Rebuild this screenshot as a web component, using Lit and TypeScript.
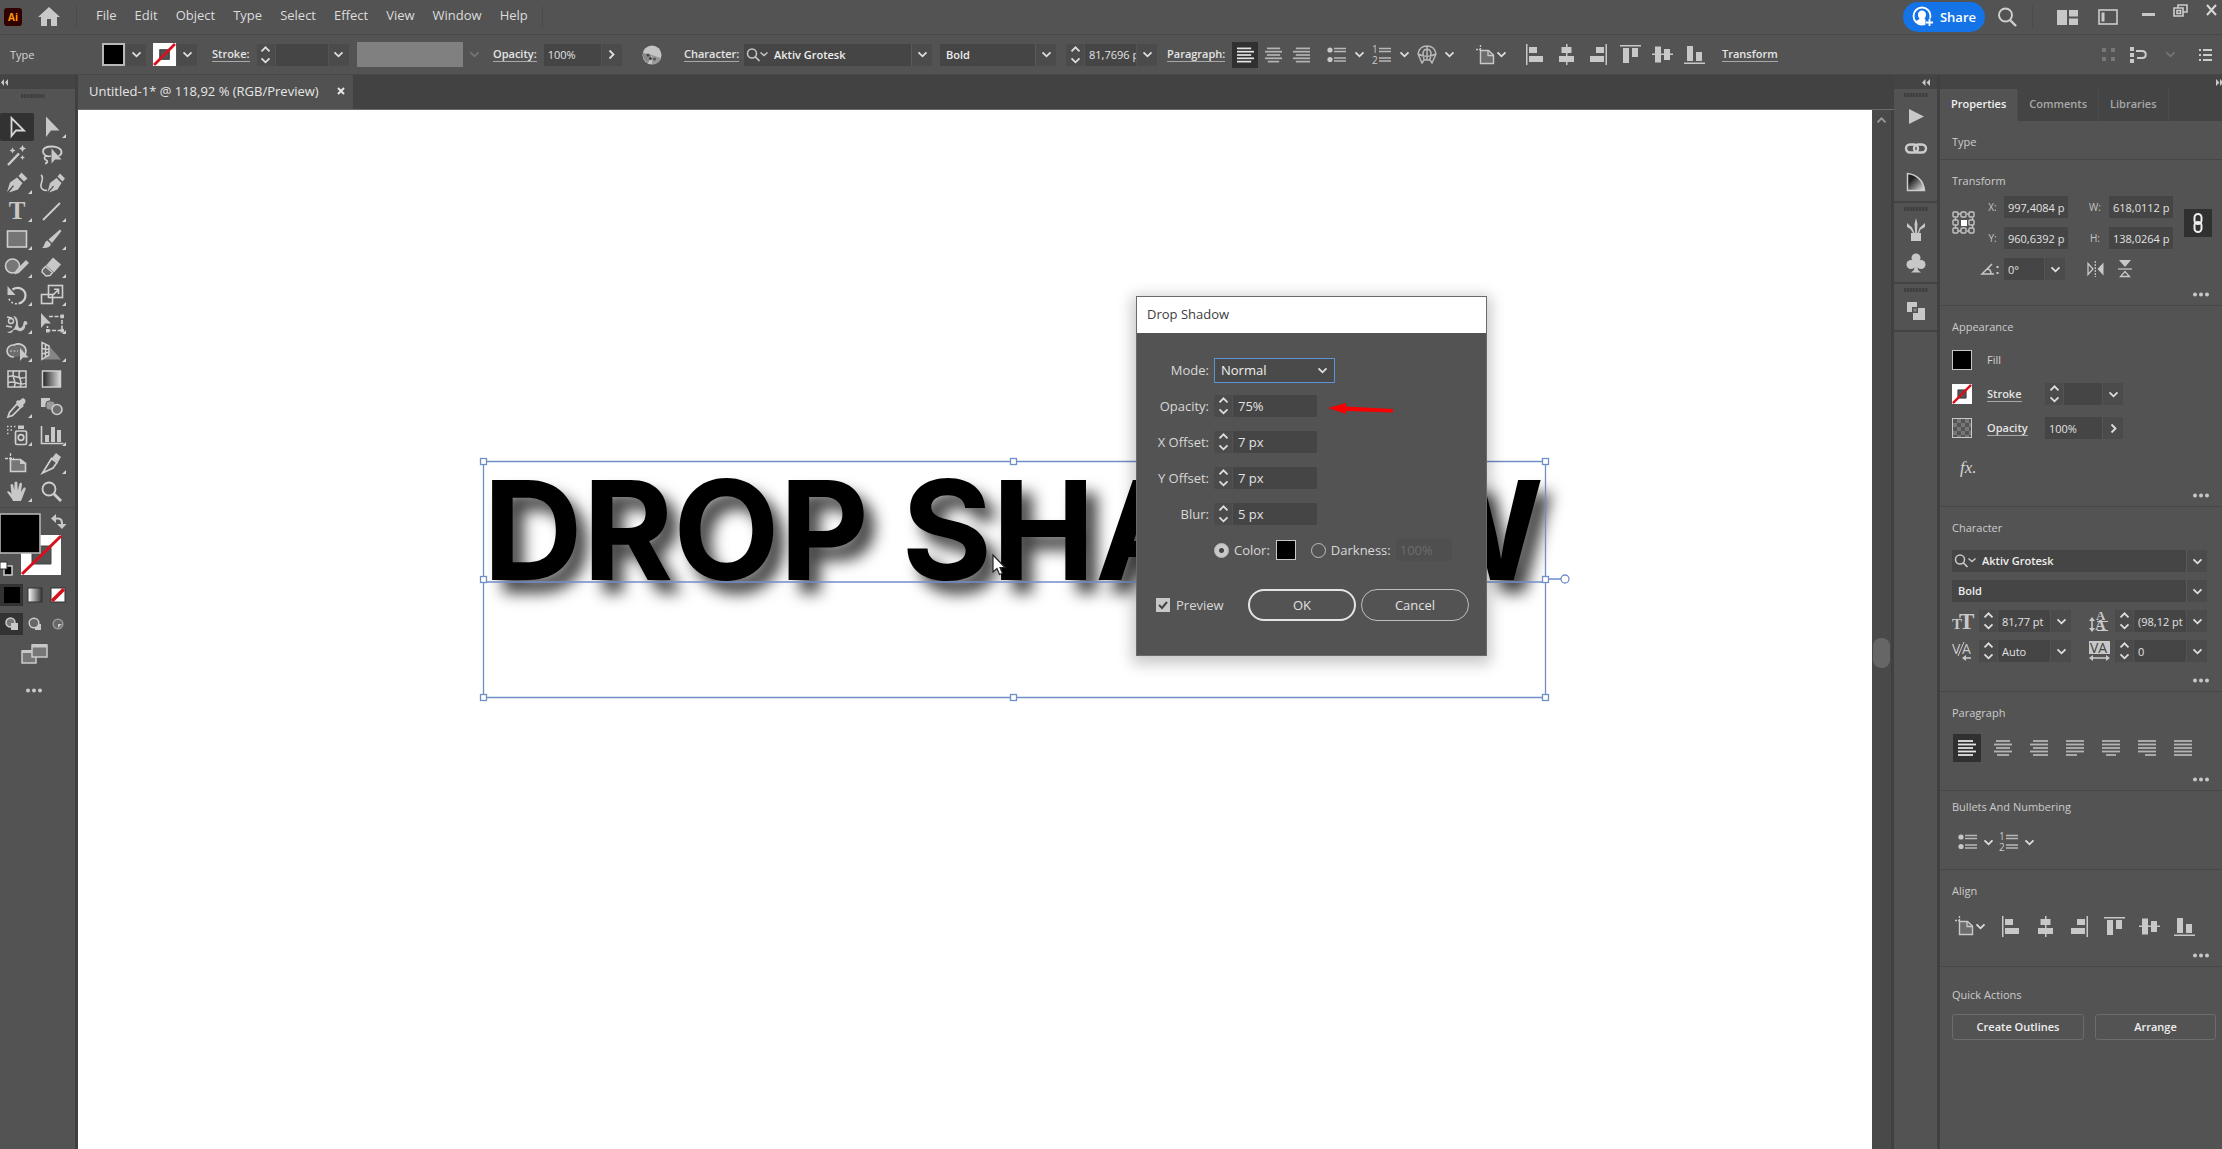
import { LitElement, html, svg, css, nothing } from "lit";
import { customElement } from "lit/decorators.js";

/* ---------- icon fragments ---------- */

const corner = svg`<path d="M32 21v4h-4z" fill="#d0d0d0" />`;

const toolIcons: Record<string, unknown> = {
  selection: svg`<path d="M11.500 5v18l4.500-5.500h8z" fill="none" stroke="#d8d8d8" stroke-width="1.800" />`,
  direct: svg`<path d="M12 3.500v20.500l5-6.500h8.500z" />${corner}`,
  wand: svg`<path d="M8 24L19 12.500" stroke="#cfcfcf" stroke-width="2.400" /><path d="M12.500 6.500l1 2 2 1-2 1-1 2-1-2-2-1 2-1zM22.500 4l1.200 2.300 2.300 1.200-2.300 1.200-1.200 2.300-1.200-2.300-2.300-1.200 2.300-1.200zM22.500 14l.8 1.700 1.700.8-1.700.8-.8 1.700-.8-1.700-1.700-.8 1.700-.8z" />`,
  lasso: svg`<path d="M17 15c-4 1-8-1-8-4.500C9 7 13 5.500 18 5.500s9.500 2 9.500 5.500c0 2-1.500 3.500-3 4M12 15c-2 1-2 3 0 4s2 3-1 3.500" fill="none" stroke="#cfcfcf" stroke-width="1.800" /><path d="M17.500 7.500v15l3.500-4h6.500z" />`,
  pen: svg`<path d="M7 23l3-9.500 7-5 5.500 5.500-4.500 6.500-9 3 5-6.500-1-.8zM18.500 7l3-3.500 6 6L24 12.500z" />${corner}`,
  curve: svg`<path d="M13.500 23l2.500-9 6.500-5 5 5-4 6.500-8.500 3 5-6-1-.8zM23.500 7.500l2.500-3 5 5-2.500 3z" /><path d="M7 6c4 3-1 8 0 12 1 3 4 4 6 3" fill="none" stroke="#cfcfcf" stroke-width="1.600" />`,
  type: svg`<text x="17" y="22" text-anchor="middle" font-family="Liberation Serif, serif" font-weight="700" font-size="25">T</text>${corner}`,
  line: svg`<path d="M9 23L26 6" stroke="#cfcfcf" stroke-width="1.800" />${corner}`,
  rect: svg`<rect x="7.500" y="6" width="19" height="16" fill="#757575" stroke="#cfcfcf" stroke-width="1.600" />${corner}`,
  brush: svg`<path d="M26 4.500l1.500 1.500-9.500 12-3.500-3.500zM13.500 15.500l3.500 3.500c-1 4-5 4-9 4 3-2 2-6.500 5.500-7.500z" />${corner}`,
  shaper: svg`<circle cx="12.500" cy="13" r="7" fill="#777" stroke="#cfcfcf" stroke-width="1.600" /><path d="M26 7l3 3-10 10-4.500 1.500 1.500-4.500z" />${corner}`,
  eraser: svg`<path d="M19 4.500l8 7-7 8-8-7z" /><path d="M11.500 13.500l7 6-2.500 3-4 .5-4-4 .5-2.500z" fill="#666" stroke="#cfcfcf" stroke-width="1.400" />${corner}`,
  rotate: svg`<path d="M12.500 8.500c6-4 13 0 13 6 0 4-3 7.500-7 8" fill="none" stroke="#cfcfcf" stroke-width="2.200" /><path d="M17 22.800c-4 0-7-2-8-5" fill="none" stroke="#cfcfcf" stroke-width="1.600" stroke-dasharray="2 2" /><path d="M7.500 5v9h8z" />${corner}`,
  scale: svg`<rect x="14.500" y="4.500" width="14" height="12" fill="none" stroke="#cfcfcf" stroke-width="1.600" /><rect x="7.500" y="13.500" width="11" height="9" fill="none" stroke="#cfcfcf" stroke-width="1.600" /><path d="M19 14l5-5m-4-.8h4.500V13" fill="none" stroke="#cfcfcf" stroke-width="1.600" />${corner}`,
  width: svg`<path d="M7 23c6 0 9-6 9-9s-2-6-3-7c4 0 5 4 5 8s2 5 4 3 1-6 3-6 3 2 2 4c-1-1-2 0-2 2s-3 5-6 4-5-2-6 0-4 3-6 1z" /><circle cx="11" cy="12" r="2.500" fill="none" stroke="#cfcfcf" stroke-width="1.400" /><path d="M7 8l5 1M6 17l6 1" stroke="#cfcfcf" stroke-width="1.600" />${corner}`,
  transform: svg`<path d="M7 4v15l4-4.500h6z" /><path d="M15 7.500h13v14H13.500V17" fill="none" stroke="#cfcfcf" stroke-width="1.600" stroke-dasharray="4 1.500" /><path d="M26.500 5.500h3.500v3.500h-3.500zM26.500 20h3.500v3.500h-3.500zM12 20h3.500v3.500h-3.500z" />${corner}`,
  shapebuilder: svg`<path d="M14 20c-4 0-7-2.500-7-6s3-6.500 7-6c6-3 12 1 12 6 0 2-1 4-2 5" fill="#6c6c6c" stroke="#cfcfcf" stroke-width="1.600" /><path d="M10 14h8" stroke="#cfcfcf" stroke-dasharray="2 1.500" /><path d="M20 11v13l3-3.500h5.500z" />${corner}`,
  perspective: svg`<path d="M16 10l11 12.500H10l6-5z" fill="#858585" /><path d="M8 5.500v17l7-4.500v-9zM8 11.500l7 1M8 17l7-2M11.500 7v13.500" fill="none" stroke="#cfcfcf" stroke-width="1.500" />${corner}`,
  mesh: svg`<rect x="8" y="6" width="18" height="16" fill="none" stroke="#cfcfcf" stroke-width="1.500" /><path d="M8 12c6-4 12 4 18 0M8 18c6-4 12 4 18 0M14 6c-4 6 4 10 0 16M20 6c-4 6 4 10 0 16" fill="none" stroke="#cfcfcf" stroke-width="1.500" />`,
  gradient: svg`<rect x="8.500" y="6" width="18" height="16" fill="url(#tg)" stroke="#cfcfcf" stroke-width="1.500" /><defs><linearGradient id="tg"><stop offset="0" stop-color="#222" /><stop offset="1" stop-color="#ddd" /></linearGradient></defs>`,
  eyedropper: svg`<path d="M21 6.500c2-3 6 .5 4 3.500l-2 2 .8 1-2 2-6-6 2-2 1 .8z" /><path d="M17 11l3.500 3.500-8 8-4.500 1.500 1.500-4.500z" fill="none" stroke="#cfcfcf" stroke-width="1.700" />${corner}`,
  blend: svg`<path d="M7 5h9v9H7z" /><rect x="12" y="8" width="9" height="9" rx="3" fill="#999" stroke="#555" /><circle cx="23" cy="16.500" r="5" fill="#6c6c6c" stroke="#cfcfcf" stroke-width="1.600" />`,
  spray: svg`<path d="M7 5.500h1.500M10.500 5.500h1.500M14 5.500h1.500M7 9h1.500M10.500 9h1.500M7 12.500h1.500" stroke="#cfcfcf" stroke-width="1.500" /><path d="M18 4.500h6V8h-6z" /><rect x="15.500" y="10" width="11" height="13.500" rx="1.500" fill="none" stroke="#cfcfcf" stroke-width="1.700" /><circle cx="21" cy="16.500" r="2.800" fill="none" stroke="#cfcfcf" stroke-width="1.700" />${corner}`,
  graph: svg`<path d="M7.500 5v17.500h22" fill="none" stroke="#cfcfcf" stroke-width="1.600" /><path d="M11 14h4v7h-4zM17 6h4v15h-4zM23 9h4v12h-4z" />${corner}`,
  artboard: svg`<path d="M10.500 4v9M5 9.500h9" stroke="#cfcfcf" stroke-width="1.300" stroke-dasharray="3 1" /><path d="M10.500 10.500h10l5 4v8h-15z" fill="#777" stroke="#cfcfcf" stroke-width="1.600" /><path d="M20 10l6 5h-6z" />`,
  slice: svg`<path d="M22 4l5 4-3 5-6-4z" /><path d="M17.500 9.500l5.500 4-4 5.500-10.500 5z" fill="none" stroke="#cfcfcf" stroke-width="1.700" />${corner}`,
  hand: svg`<path d="M13 24c-1-3-4-6-6-9 1-1.500 3-.5 4.500 2L10.500 8c.8-1.500 2.500-1 2.800.5l1 5 .2-8c.8-1.500 2.500-1.300 2.800 0l.5 8 1.700-7c1-1.300 2.500-.8 2.500.8L21 15l2.500-4c1-1 2.500-.3 2.200 1L23 19l-2 5z" />${corner}`,
  zoom: svg`<circle cx="15" cy="12" r="6.500" fill="none" stroke="#cfcfcf" stroke-width="1.800" /><path d="M20 17l7 7" stroke="#cfcfcf" stroke-width="2.800" />`,
};

const toolNames = Object.keys(toolIcons);

const bars = (rows: [number, number][], c = "#b4b4b4") =>
  svg`${rows.map((r, i) => svg`<path d="M${r[0]} ${2 + i * 3.5}H${r[1]}" stroke=${c} stroke-width="1.800" />`)}`;

const paraIcons: Record<string, [number, number][]> = {
  "Align left": [[0, 15], [0, 18], [0, 15], [0, 18], [0, 15]],
  "Align center": [[2, 16], [0, 18], [2, 16], [0, 18], [3, 15]],
  "Align right": [[3, 18], [0, 18], [3, 18], [0, 18], [3, 18]],
  "Justify last left": [[0, 18], [0, 18], [0, 18], [0, 18], [0, 11]],
  "Justify last center": [[0, 18], [0, 18], [0, 18], [0, 18], [4, 14]],
  "Justify last right": [[0, 18], [0, 18], [0, 18], [0, 18], [7, 18]],
  "Justify all": [[0, 18], [0, 18], [0, 18], [0, 18], [0, 18]],
};
const para = (n: string) => html`<svg width="18" height="18" viewBox="0 0 18 18">${bars(paraIcons[n], n === "Align left" ? "#e4e4e4" : "#b4b4b4")}</svg>`;

const alignIcons: Record<string, unknown> = {
  "Align left edges": svg`<path d="M2 0h1.500v21H2zM5 3h8v6H5zM5 12h14v6H5z" />`,
  "Align horizontal centers": svg`<path d="M10 0h1.500v21H10zM5.500 3h10v6h-10zM3 12h15v6H3z" />`,
  "Align right edges": svg`<path d="M17.500 0H19v21h-1.500zM8 3h8v6H8zM2 12h14v6H2z" />`,
  "Align top edges": svg`<path d="M0 1h21v1.500H0zM3 4h6v15H3zM12 4h6v9h-6z" />`,
  "Align vertical centers": svg`<path d="M0 9.500h21V11H0zM3 2.500h6v16H3zM12 5h6v11h-6z" />`,
  "Align bottom edges": svg`<path d="M0 18.500h21V20H0zM3 2h6v15H3zM12 8h6v9h-6z" />`,
};

const chev = html`<svg class="chev" width="11" height="7" viewBox="0 0 11 7"><path d="M1.500 1.300l4 4 4-4" /></svg>`;
const chevR = html`<svg class="chev" width="7" height="11" viewBox="0 0 7 11"><path d="M1.500 1.500l4 4-4 4" /></svg>`;
const chevU = html`<svg class="chev" width="11" height="7" viewBox="0 0 11 7"><path d="M1.500 5.300l4-4 4 4" /></svg>`;
const bulletIcon = html`<svg width="20" height="20" viewBox="0 0 20 20"><circle cx="3" cy="5" r="2.600" /><circle cx="3" cy="14.500" r="2.600" /><path d="M7 3.500h12M7 6.500h12M7 13h12M7 16h12" stroke="#b8b8b8" stroke-width="1.500" /></svg>`;
const numberIcon = html`<svg width="20" height="20" viewBox="0 0 20 20"><text x="0" y="8" font-size="10">1</text><text x="0" y="19" font-size="10">2</text><path d="M7 3.500h12M7 6.500h12M7 13h12M7 16h12" stroke="#b8b8b8" stroke-width="1.500" /></svg>`;
const artboardIcon = html`<svg width="20" height="22" viewBox="0 0 20 22"><path d="M0 5.500h6M4.500 1v6" stroke="#c8c8c8" stroke-width="1.300" stroke-dasharray="2 1" /><path d="M4.500 6.500h8l5 4.500v8.500h-13z" fill="#6d6d6d" stroke="#c8c8c8" stroke-width="1.400" /><path d="M12 6.500v5h5.500" fill="none" stroke="#c8c8c8" stroke-width="1.300" /></svg>`;
const searchSmall = html`<svg width="24" height="16" viewBox="0 0 24 16"><circle cx="6" cy="6.500" r="4.500" fill="none" stroke="#c8c8c8" stroke-width="1.500" /><path d="M9.500 10l4 4" stroke="#c8c8c8" stroke-width="1.700" /><path d="M14.500 5.500l3.500 3 3.500-3" fill="none" stroke="#c8c8c8" stroke-width="1.500" /></svg>`;
const noneSwatch = (s: number) => html`<svg width=${s} height=${s} viewBox="0 0 22 22"><path d="M0 0h22v22H0z" fill="#fff" /><path d="M6.500 6.500h9v9h-9z" fill="#535353" stroke="#333" /><path d="M1 21L21 1" stroke="#d8101c" stroke-width="2.600" /></svg>`;

const stepper = (name: string) => html`<span class="stepper"
  ><button aria-label="Increase ${name}">${chevU}</button
  ><button aria-label="Decrease ${name}">${chev}</button></span>`;

const combo = (name: string, value: string, opts: { step?: boolean; arrow?: unknown } = {}) => html`<span class="combo">
  ${opts.step ? stepper(name) : nothing}
  <input class="field" aria-label=${name} .value=${value} />
  <button class="dd" aria-label="${name} options">${opts.arrow ?? chev}</button>
</span>`;

const choice = (name: string, value: string, search = false) => html`<span class="choice">
  ${search ? html`<span class="search">${searchSmall}</span>` : nothing}
  <select class=${search ? "indent" : ""} aria-label=${name}><option>${value}</option></select>
  <span class="dd">${chev}</span>
</span>`;

const shared = css`
  * { box-sizing: border-box; }
  button, input, select { font: inherit; color: inherit; margin: 0; padding: 0; border: 0; background: none; border-radius: 0; }
  button { display: inline-flex; align-items: center; justify-content: center; }
  svg { display: block; flex: none; fill: #c8c8c8; overflow: visible; }
  .chev { fill: none; stroke: #dedede; stroke-width: 1.8; }
  .field { background: #454545; height: 22px; min-width: 0; flex: 1; width: 100%; padding: 0 0 0 4px; color: #e2e2e2; }
  .combo { display: flex; gap: 1px; height: 22px; }
  .stepper { width: 18px; flex: none; background: #4b4b4b; display: grid; grid-template-rows: 1fr 1fr; }
  .dd { width: 20px; height: 22px; flex: none; background: #4b4b4b; display: inline-flex; align-items: center; justify-content: center; }
  .choice { display: grid; grid-template-columns: 1fr 21px; height: 22px; }
  .choice select { grid-area: 1 / 1 / 2 / 3; appearance: none; background: #454545; padding: 0 6px; color: #eeeeee; font-weight: 600; width: 100%; height: 22px; }
  .choice select.indent { padding-left: 30px; }
  .choice .dd { grid-area: 1 / 2; border-left: 1px solid #5a5a5a; width: 21px; pointer-events: none; }
  .choice .search { grid-area: 1 / 1; z-index: 1; align-self: center; padding-left: 2px; pointer-events: none; }
  .link { border-bottom: 1px solid #a8a8a8; line-height: 14px; color: #e4e4e4; font-weight: 600; white-space: nowrap; text-decoration: none; }
  .dots { height: 12px; width: 18px; }
  .grip { height: 13px; display: flex; align-items: center; justify-content: center; }
  .grip::before { content: ""; width: 24px; height: 4px; background: repeating-linear-gradient(90deg, #404040 0 2px, #4b4b4b 2px 3px); }
`;

const dots = html`<button class="dots" aria-label="More options"><svg width="18" height="5" viewBox="0 0 18 5"><circle cx="3" cy="2.500" r="2" /><circle cx="9" cy="2.500" r="2" /><circle cx="15" cy="2.500" r="2" /></svg></button>`;

/* ---------- menu and control bars ---------- */

@customElement("app-menubar")
class AppMenubar extends LitElement {
  static styles = [shared, css`
    :host { display: flex; align-items: center; height: 34px; border-bottom: 1px solid #484848; font-size: 13px; color: #dcdcdc; }
    .logo { margin-left: 4px; width: 18px; height: 18px; border-radius: 3px; background: #310000; color: #ff9a00; font-size: 10px; font-weight: 700; line-height: 18px; text-align: center; }
    .home { margin-left: 16px; }
    .sep { width: 1px; height: 22px; background: #4a4a4a; }
    .home + .sep { margin-left: 16px; }
    nav { display: flex; gap: 18px; margin: 0 14px 4px 19px; }
    .right { margin-left: auto; display: flex; align-items: center; height: 34px; }
    .share { width: 82px; height: 30px; border-radius: 15px; background: #1473e6; color: #fff; font-weight: 600; gap: 6px; }
    .right .find { margin: 0 15px 0 12px; }
    .spaces { display: flex; gap: 20px; margin: 0 24px; }
    .win { display: flex; gap: 18px; align-items: center; align-self: flex-start; height: 20px; padding-right: 5px; }
  `];
  render() {
    return html`
      <span class="logo">Ai</span>
      <button class="home" aria-label="Home"><svg width="22" height="20" viewBox="0 0 22 20"><path d="M11 0l11 10h-3v9h-6v-7H9v7H3v-9H0z" /></svg></button>
      <span class="sep"></span>
      <nav>${["File", "Edit", "Object", "Type", "Select", "Effect", "View", "Window", "Help"].map((m) => html`<button>${m}</button>`)}</nav>
      <span class="sep"></span>
      <div class="right">
        <button class="share">
          <svg width="22" height="22" viewBox="0 0 22 22"><circle cx="10" cy="10" r="8.500" fill="none" stroke="#fff" stroke-width="1.800" /><path d="M10 4.500c2.500 0 4 1.800 4 4.200 0 2-1 3-1.500 4 .5 1 2.500 1.300 3.500 2.300-3 4-9 4-12 0 1-1 3-1.300 3.500-2.300C7 11.700 6 10.700 6 8.700c0-2.400 1.500-4.200 4-4.200z" fill="#fff" /><path d="M17.500 12.500v8M13.500 16.500h8" stroke="#1473e6" stroke-width="5" /><path d="M17.500 13v7M14 16.500h7" stroke="#fff" stroke-width="1.800" /></svg>Share
        </button>
        <button class="find" aria-label="Search"><svg width="20" height="20" viewBox="0 0 20 20"><circle cx="8.500" cy="8" r="6.500" fill="none" stroke="#d0d0d0" stroke-width="1.900" /><path d="M13 13l6 6" stroke="#d0d0d0" stroke-width="2.400" /></svg></button>
        <span class="sep"></span>
        <span class="spaces">
          <button aria-label="Arrange documents"><svg width="21" height="15" viewBox="0 0 21 15"><path d="M0 0h10v15H0zM12 0h9v6.500h-9zM12 8.500h9V15h-9z" /></svg></button>
          <button aria-label="Workspace"><svg width="20" height="16" viewBox="0 0 20 16"><rect x="1" y="1" width="18" height="14" fill="none" stroke="#ccc" stroke-width="1.600" /><path d="M3.500 3.500h3v9h-3z" /></svg></button>
        </span>
        <span class="win">
          <button aria-label="Minimize"><svg width="13" height="14" viewBox="0 0 13 14"><path d="M0 10h13v3H0z" /></svg></button>
          <button aria-label="Restore"><svg width="15" height="13" viewBox="0 0 15 13"><path d="M5 4V1h9v7h-4M1 4h9v8H1zM4 6.500h3.500v3H4z" fill="none" stroke="#ccc" stroke-width="1.600" /></svg></button>
          <button aria-label="Close"><svg width="11" height="12" viewBox="0 0 11 12"><path d="M1 1l9 10M10 1L1 11" stroke="#d8d8d8" stroke-width="2" /></svg></button>
        </span>
      </div>`;
  }
}

@customElement("app-controlbar")
class AppControlbar extends LitElement {
  static styles = [shared, css`
    :host { display: grid; height: 39px; align-items: center; padding: 0 8px 0 10px; border-bottom: 1px solid #474747; overflow: hidden;
      grid-template-columns: 92px 110px 145px 136px 149px 42px 60px 196px 126px 101px 65px 95px 149px 48px 198px 1fr auto; }
    .g { display: flex; align-items: center; }
    .swatch { width: 23px; height: 23px; border: 2px solid #b8b8b8; background: #000; }
    .none { margin-left: 7px; }
    .g > .dd { margin-left: 1px; }
    .stroke .combo { width: 92px; margin-left: 7px; }
    .profile { width: 106px; height: 25px; background: #808080; }
    .faint { opacity: 0.25; margin-left: 6px; }
    .opacity .combo { width: 78px; margin-left: 7px; }
    .recolor { justify-self: start; }
    .font { width: 188px; }
    .style { width: 116px; }
    .size { width: 91px; }
    .al button { width: 26px; height: 26px; margin-right: 2px; }
    .al svg { width: 17px; }
    .al .on { background: #303030; }
    .lists { gap: 7px; }
    .lists button { gap: 7px; }
    .aligns { gap: 11px; }
    .right { gap: 12px; }
  `];
  render() {
    return html`
      <span>Type</span>
      <span class="g"><button class="swatch" aria-label="Fill"></button><button class="dd" aria-label="Fill options">${chev}</button>
        <button class="none" aria-label="Stroke colour">${noneSwatch(23)}</button><button class="dd" aria-label="Stroke colour options">${chev}</button></span>
      <span class="g stroke"><a class="link" href="#stroke">Stroke:</a>${combo("Stroke weight", "", { step: true })}</span>
      <span class="g"><span class="profile"></span><span class="faint">${chev}</span></span>
      <span class="g opacity"><a class="link" href="#opacity">Opacity:</a>${combo("Opacity", "100%", { arrow: chevR })}</span>
      <button class="recolor" aria-label="Recolor artwork"><svg width="20" height="20" viewBox="0 0 20 20"><circle cx="10" cy="10" r="9.500" fill="#c4c4c4" /><path d="M10 10L1 8a9 9 0 0 0 5 10z" fill="#888" /><path d="M10 10l9 3a9 9 0 0 1-9 6z" fill="#999" /><circle cx="6" cy="10" r="1.500" fill="#444" /><circle cx="8.500" cy="13.500" r="1.500" fill="#444" /><circle cx="12.500" cy="14" r="1.500" fill="#555" /></svg></button>
      <span class="g"><a class="link" href="#character">Character:</a></span>
      <span class="font">${choice("Font family", "Aktiv Grotesk", true)}</span>
      <span class="style">${choice("Font style", "Bold")}</span>
      <span class="size">${combo("Font size", "81,7696 pt", { step: true })}</span>
      <span class="g"><a class="link" href="#paragraph">Paragraph:</a></span>
      <span class="g al">${Object.keys(paraIcons).slice(0, 3).map((n, i) => html`<button class=${i ? "" : "on"} aria-label=${n}>${para(n)}</button>`)}</span>
      <span class="g lists">
        <button aria-label="Bullets">${bulletIcon}${chev}</button>
        <button aria-label="Numbering">${numberIcon}${chev}</button>
        <button aria-label="Envelope"><svg width="20" height="20" viewBox="0 0 20 20"><path d="M5 18l-4-9C2 3 6 1 10 1s8 2 9 8l-4 9-2-3H7zM7 15L6 8c1-5 7-5 8 0l-1 7M10 1v14M1 9c5 3 13 3 18 0" fill="none" stroke="#b8b8b8" stroke-width="1.500" /></svg>${chev}</button>
      </span>
      <span class="g"><button aria-label="Align to">${artboardIcon}${chev}</button></span>
      <span class="g aligns">${Object.entries(alignIcons).map(([n, i]) => html`<button aria-label=${n}><svg width="21" height="21" viewBox="0 0 21 21">${i}</svg></button>`)}</span>
      <span class="g"><a class="link" href="#transform">Transform</a></span>
      <span class="g right">
        <svg width="16" height="16" viewBox="0 0 16 16"><path d="M1 1h4v4H1zM10 1h4v4h-4zM1 10h4v4H1zM10 10h4v4h-4z" fill="#777" /></svg>
        <svg width="18" height="18" viewBox="0 0 18 18"><path d="M1 1h4v4H1zM1 7h4v4H1zM1 13h4v4H1z" /><path d="M7 5h6c5 0 5 7 0 7H8" fill="none" stroke="#ccc" stroke-width="2" /></svg>
        <span class="faint">${chev}</span>
        <button aria-label="Bar menu"><svg width="26" height="14" viewBox="0 0 26 14"><path d="M11 2h2M15 2h9M11 7h2M15 7h9M11 12h2M15 12h9" stroke="#ccc" stroke-width="2" /></svg></button>
      </span>`;
  }
}

/* ---------- tools ---------- */

@customElement("app-tools")
class AppTools extends LitElement {
  static styles = [shared, css`
    :host { display: flex; flex-direction: column; border-right: 3px solid #404040; }
    .head { height: 14px; background: #444444; padding: 4px 0 0 1px; }
    .grid { display: grid; grid-template-columns: 34px 34px; grid-auto-rows: 28px; margin: 11px 0 2px; }
    .grid button { border-radius: 2px; }
    .grid .on { background: #323232; }
    .grip { padding-right: 9px; }
    .rule { height: 1px; background: #4a4a4a; }
    .pair { margin-top: 5px; }
    .row { display: flex; padding-top: 7px; }
    .row button { width: 23px; height: 22px; }
    .row .on { background: #333333; }
    .below { display: flex; flex-direction: column; align-items: center; width: 68px; gap: 20px; padding-top: 9px; }
  `];
  render() {
    return html`
      <div class="head"><svg width="7" height="7" viewBox="0 0 7 7"><path d="M3 0v7L0 3.500zM7 0v7L4 3.500z" /></svg></div>
      <div class="grip"></div>
      <div class="grid">${toolNames.map((n, i) => html`<button class=${i ? "" : "on"} aria-label="${n} tool"><svg width="34" height="28" viewBox="0 0 34 28">${toolIcons[n]}</svg></button>`)}</div>
      <div class="rule"></div>
      <svg class="pair" width="68" height="64" viewBox="0 0 68 64">
        <path d="M21 22h40v40H21z" fill="#fff" /><path d="M32 33h19v18H32z" fill="#535353" stroke="#444" /><path d="M22 61L61 23" stroke="#d8101c" stroke-width="3" />
        <rect x="0" y="1" width="40" height="39" fill="#000" stroke="#b5b5b5" stroke-width="1.600" />
        <path d="M55 5.500h3c3 0 4 2 4 5v2" fill="none" stroke="#ccc" stroke-width="2" /><path d="M56 1v9l-5-4.500zM57 11h9.500L62 16z" />
        <path d="M4 53h8v9H4z" fill="#000" stroke="#ccc" stroke-width="1.500" /><path d="M0 49h7v7H0z" fill="#fff" stroke="#333" />
      </svg>
      <div class="row">
        <button class="on" aria-label="Color"><svg width="18" height="18" viewBox="0 0 18 18"><path d="M1 1h16v16H1z" fill="#000" /></svg></button>
        <button aria-label="Gradient"><svg width="16" height="16" viewBox="0 0 16 16"><defs><linearGradient id="g"><stop offset="0" stop-color="#fff" /><stop offset="1" stop-color="#333" /></linearGradient></defs><rect x="1" y="1" width="14" height="14" fill="url(#g)" stroke="#333" /></svg></button>
        <button aria-label="None"><svg width="16" height="16" viewBox="0 0 16 16"><rect x="1" y="1" width="14" height="14" fill="#fff" stroke="#333" /><path d="M2 14L14 2" stroke="#d8101c" stroke-width="3.500" /></svg></button>
      </div>
      <div class="row">
        <button class="on" aria-label="Draw normal"><svg width="14" height="14" viewBox="0 0 14 14"><circle cx="5.500" cy="5.500" r="4.500" fill="#777" stroke="#ccc" stroke-width="1.500" /><path d="M6 6h7v7H6z" /></svg></button>
        <button aria-label="Draw behind"><svg width="14" height="14" viewBox="0 0 14 14"><path d="M7 7h6v6H7z" /><circle cx="6" cy="6" r="4.800" fill="#666" stroke="#ccc" stroke-width="1.500" /></svg></button>
        <button aria-label="Draw inside"><svg width="14" height="14" viewBox="0 0 14 14"><circle cx="7" cy="7" r="4.800" fill="#666" stroke="#999" stroke-width="1.500" /><path d="M7 7h4L7 11z" /></svg></button>
      </div>
      <div class="below">
        <button aria-label="Screen mode"><svg width="27" height="20" viewBox="0 0 27 20"><path d="M1 7h14v12H1z" fill="#777" stroke="#ccc" stroke-width="1.500" /><path d="M11 1h15v12H11z" fill="#777" stroke="#ccc" stroke-width="1.500" /><path d="M1 6h10v3H1zM11 0h15v3.500H11z" /></svg></button>
        ${dots}
      </div>`;
  }
}

/* ---------- document ---------- */

@customElement("drop-shadow-dialog")
class DropShadowDialog extends LitElement {
  static styles = [shared, css`
    :host { display: block; width: 351px; background: #535353; border: 1px solid #6a6a6a; box-shadow: 0 4px 14px 4px rgba(0, 0, 0, 0.22); color: #d8d8d8; font-size: 13px; }
    h2 { margin: 0; height: 36px; background: #fff; color: #3c3c3c; font-size: 13px; font-weight: 400; line-height: 34px; padding-left: 10px; }
    .rows { display: grid; grid-template-columns: 72px 1fr; column-gap: 5px; row-gap: 12px; grid-auto-rows: 24px; align-items: center; padding: 25px 0 0; }
    .rows > label { text-align: right; }
    .combo { width: 103px; }
    .field { font-size: 13px; padding: 0 5px; }
    .mode { width: 121px; height: 25px; display: grid; border: 1px solid #5a93d6; background: #4a4a4a; align-items: center; }
    .mode select { grid-area: 1 / 1; appearance: none; padding: 0 6px; color: #eeeeee; }
    .mode .chev { grid-area: 1 / 1; justify-self: end; margin-right: 6px; pointer-events: none; }
    .colors { grid-column: 1 / 3; display: flex; align-items: center; padding-left: 77px; gap: 5px; }
    input[type="radio"] { appearance: none; width: 15px; height: 15px; border: 1px solid #bdbdbd; border-radius: 50%; }
    input[type="radio"]:checked { background: radial-gradient(circle, #444444 0 2px, #c8c8c8 3px); }
    .swatch { width: 20px; height: 20px; background: #000; border: 1px solid #c8c8c8; margin: 0 10px 0 1px; }
    .off { width: 56px; height: 22px; padding: 0 4px; background: #4f4f4f; color: #6c6c6c; }
    .foot { display: flex; align-items: center; padding: 27px 17px 34px 19px; }
    input[type="checkbox"] { appearance: none; width: 14px; height: 14px; background: #c8c8c8; }
    .check { display: grid; align-items: center; }
    .check > * { grid-area: 1 / 1; }
    .check svg { pointer-events: none; }
    .foot label { margin: 0 auto 0 6px; }
    .foot button { width: 108px; height: 32px; border-radius: 16px; border: 1px solid #bdbdbd; color: #e2e2e2; }
    .foot .ok { border: 2px solid #e4e4e4; margin-right: 5px; }
  `];
  render() {
    const rows = [["Opacity:", "75%"], ["X Offset:", "7 px"], ["Y Offset:", "7 px"], ["Blur:", "5 px"]];
    return html`
      <h2>Drop Shadow</h2>
      <div class="rows">
        <label for="mode">Mode:</label>
        <span class="mode"><select id="mode"><option>Normal</option></select>${chev}</span>
        ${rows.map(([l, v], i) => html`<label for="v${i}">${l}</label><span class="combo">${stepper(l)}<input class="field" id="v${i}" .value=${v} /></span>`)}
        <span class="colors">
          <input type="radio" id="color" name="kind" checked /><label for="color">Color:</label><button class="swatch" aria-label="Shadow colour"></button>
          <input type="radio" id="dark" name="kind" /><label for="dark">Darkness:</label><input class="off" aria-label="Darkness value" .value=${"100%"} disabled />
        </span>
      </div>
      <div class="foot">
        <span class="check"><input type="checkbox" id="pv" checked /><svg width="14" height="14" viewBox="0 0 14 14"><path d="M3 7l3 3 5-6" fill="none" stroke="#444" stroke-width="2" /></svg></span>
        <label for="pv">Preview</label>
        <button class="ok">OK</button><button>Cancel</button>
      </div>`;
  }
}

@customElement("app-document")
class AppDocument extends LitElement {
  static styles = [shared, css`
    :host { display: grid; grid-template: 35px 1fr / 1fr 22px; min-width: 0; min-height: 0; background: #424242; }
    .tabs { grid-column: 1 / 3; display: flex; border-bottom: 1px solid #6c6c6c; }
    .tab { display: flex; align-items: center; gap: 18px; padding: 0 8px 2px 11px; background: #515151; color: #e6e6e6; font-size: 13px; font-weight: 500; }
    .canvas { position: relative; background: #fff; overflow: hidden; }
    .art { position: absolute; left: 405px; top: 370px; margin: 0; font: 700 138px/100px Inter, sans-serif; white-space: nowrap; color: #000; text-shadow: 11px 13px 15px rgba(0, 0, 0, 0.75); }
    .sel { position: absolute; left: 400px; top: 346px; }
    drop-shadow-dialog { position: absolute; left: 1058px; top: 186px; }
    .arrow { position: absolute; left: 1250px; top: 292px; }
    .cursor { position: absolute; left: 914px; top: 444px; }
    .scroll { background: #494949; border-right: 3px solid #404040; display: flex; flex-direction: column; align-items: center; padding-top: 7px; }
    .scroll .chev { stroke: #9a9a9a; }
    .thumb { width: 17px; height: 30px; border-radius: 8px; background: #666666; margin-top: 514px; }
  `];
  render() {
    const pts: [number, number][] = [[5, 5], [535, 5], [1067, 5], [5, 123], [1067, 123], [5, 241], [535, 241], [1067, 241]];
    return html`
      <div class="tabs"><div class="tab"><span>Untitled-1* @ 118,92 % (RGB/Preview)</span>
        <button aria-label="Close document"><svg width="8" height="8" viewBox="0 0 8 8"><path d="M1 1l6 6M7 1L1 7" stroke="#e6e6e6" stroke-width="2" /></svg></button></div></div>
      <main class="canvas">
        <h1 class="art">DROP SHADOW</h1>
        <svg class="sel" width="1100" height="248" viewBox="0 0 1100 248">
          <path d="M5.500 5.500h1062v236H5.500zM5.500 126h1062M1067 123h16" fill="none" stroke="#6f8fc8" stroke-width="1.300" />
          ${pts.map(([x, y]) => svg`<rect x=${x - 2.5} y=${y - 2.5} width="6" height="6" fill="#fff" stroke="#6f8fc8" stroke-width="1.300" />`)}
          <circle cx="1087" cy="123" r="4" fill="#fff" stroke="#6f8fc8" stroke-width="1.300" />
        </svg>
        <svg class="cursor" width="16" height="24" viewBox="0 0 16 24"><path d="M1 1v17l4-3.500 2.500 6 3-1.300L8 13.500h5z" fill="#fff" stroke="#222" stroke-width="1.200" /></svg>
        <drop-shadow-dialog></drop-shadow-dialog>
        <svg class="arrow" width="66" height="14" viewBox="0 0 66 14"><path d="M0 6L18 1v3.500l47 2.500v3.500L18 9v3z" fill="#f80000" /></svg>
      </main>
      <div class="scroll">${chevU}<span class="thumb"></span></div>`;
  }
}

/* ---------- dock and properties ---------- */

@customElement("app-dock")
class AppDock extends LitElement {
  static styles = [shared, css`
    :host { display: block; border-right: 3px solid #404040; }
    .head { height: 14px; background: #444444; display: flex; justify-content: flex-end; padding: 4px 7px 0 0; }
    .group { border-bottom: 2px solid #444444; padding-bottom: 3px; }
    .group .grip { height: 10px; padding-top: 2px; }
    .group button { display: flex; width: 100%; height: 33px; }
  `];
  render() {
    const b = (n: string, i: unknown) => html`<button aria-label=${n}><svg width="22" height="22" viewBox="0 0 22 22">${i}</svg></button>`;
    return html`
      <div class="head"><svg width="8" height="7" viewBox="0 0 8 7"><path d="M3.500 0v7L0 3.500zM8 0v7L4.500 3.500z" /></svg></div>
      <div class="group"><div class="grip"></div>
        ${b("Play", svg`<path d="M4 4l15 7.500L4 19z" />`)}
        ${b("Links", svg`<rect x="1" y="6.500" width="12" height="8" rx="4" fill="none" stroke="#ccc" stroke-width="2.400" /><rect x="9" y="6.500" width="12" height="8" rx="4" fill="none" stroke="#ccc" stroke-width="2.400" />`)}
        ${b("Gradient", svg`<defs><linearGradient id="q" x1="0" x2="1" y1="0" y2="1"><stop offset=".3" stop-color="#222" /><stop offset="1" stop-color="#eee" /></linearGradient></defs><path d="M2.500 2.500c9 1 16 7 17 17h-17z" fill="url(#q)" stroke="#ccc" stroke-width="1.500" />`)}
      </div>
      <div class="group"><div class="grip"></div>
        ${b("Brushes", svg`<path d="M6 14h10v8H6zM9.500 5L11-1l1.500 6-.7 9h-1.600zM2 4l5 4.500 2.500 5.500H8L5.500 10 2 8zM20 4v4l-4.500 2.500L14 14h-1.500l2-5z" />`)}
        ${b("Symbols", svg`<circle cx="11" cy="6" r="4.500" /><circle cx="6" cy="12.500" r="4.500" /><circle cx="16" cy="12.500" r="4.500" /><path d="M10 10h2l1 8 3 2.500H6L9 18z" />`)}
      </div>
      <div class="group"><div class="grip"></div>
        ${b("Pathfinder", svg`<path d="M2 2h10v5H7v5H2z" /><path d="M13 8h7v12H8v-7h5z" /><path d="M8.500 8.500h3v3h-3z" fill="#888" />`)}
      </div>`;
  }
}

@customElement("app-properties")
class AppProperties extends LitElement {
  static styles = [shared, css`
    :host { display: block; overflow: hidden; }
    .head { height: 14px; background: #444444; display: flex; justify-content: flex-end; padding-top: 4px; }
    .tabs { display: flex; height: 32px; background: #444444; }
    .tabs button { padding: 0 11px 2px; font-weight: 600; color: #a8a8a8; border-right: 1px solid #4c4c4c; }
    .tabs .on { background: #535353; color: #f0f0f0; }
    section { padding: 13px 12px 5px; border-bottom: 1px solid #474747; margin: 0; display: flex; flex-direction: column; }
    h3 { font: inherit; line-height: 16px; margin: 0; color: #cccccc; }
    .dots { align-self: flex-end; }
    .type { padding-bottom: 9px; }
    .tf { display: grid; grid-template-columns: 29px 23px 64px 13px 28px 64px 11px 28px; grid-auto-rows: 22px; row-gap: 9px; align-items: center; margin: 7px 0 8px; }
    .tf .ref { grid-row: 1 / 3; }
    .tf label { text-align: center; font-size: 10px; color: #c4c4c4; }
    .tf .lock { grid-area: 1 / 8 / 3 / 9; width: 28px; height: 28px; background: #303030; }
    .tf .angle { grid-area: 3 / 2; display: flex; }
    .tf .combo { width: 61px; }
    .tf .flips { grid-area: 3 / 5 / 4 / 7; display: flex; gap: 14px; padding-left: 6px; }
    .c2 { grid-column: 2; } .c3 { grid-column: 3; } .c5 { grid-column: 5; } .c6 { grid-column: 6; }
    .rows { display: grid; grid-template-columns: 35px 58px 78px; grid-auto-rows: 22px; row-gap: 12px; align-items: center; padding: 14px 0 0; justify-items: start; }
    .rows .combo { width: 78px; }
    .sw { width: 20px; height: 20px; border: 1px solid #c8c8c8; background: #000; }
    .sw.checks { background: repeating-conic-gradient(#777777 0 25%, #555555 0 50%) 0 0 / 8px 8px; }
    .fx { font: italic 17px/34px "Liberation Serif", serif; padding-left: 8px; margin: 12px 0 4px; align-self: flex-start; }
    .char { display: grid; grid-template-columns: 27px 92px 18px 26px 92px; grid-auto-rows: 22px; row-gap: 8px; padding: 14px 0 12px; }
    .char .choice { grid-column: 1 / 6; }
    .char .c4 { grid-column: 4; }
    .char > svg { align-self: center; }
    .ps { display: flex; gap: 8px; padding: 13px 0 11px 1px; }
    .ps button { width: 28px; height: 28px; }
    .ps .on { background: #303030; }
    .tight { padding: 8px 12px 16px; }
    .lists { display: flex; gap: 5px; padding: 16px 0 0 6px; }
    .lists button { gap: 5px; height: 22px; }
    .al { display: flex; justify-content: space-between; padding: 16px 15px 12px 3px; }
    .last { border: 0; padding: 20px 6px 5px 12px; }
    .qa { display: grid; grid-template-columns: 132px 1fr; gap: 11px; padding-top: 11px; }
    .qa button { height: 26px; border: 1px solid #6c6c6c; border-radius: 3px; font-weight: 600; color: #eeeeee; }
  `];
  render() {
    const pt = [1, 9, 17];
    return html`
      <div class="head"><svg width="6" height="7" viewBox="0 0 6 7"><path d="M0 0v7l3.500-3.500zM4 0v7l3.500-3.500z" /></svg></div>
      <div class="tabs"><button class="on">Properties</button><button>Comments</button><button>Libraries</button></div>
      <section class="type"><h3>Type</h3></section>
      <section><h3>Transform</h3>
        <div class="tf">
          <svg class="ref" width="24" height="24" viewBox="0 0 24 24">
            <path d="M6 3h3M15 3h3M6 20h3M15 20h3M3.500 7v3M3.500 14v3M20.500 7v3M20.500 14v3" stroke="#c4c4c4" stroke-width="1.300" />
            ${pt.flatMap((y) => pt.map((x) => x === 9 && y === 9
              ? svg`<rect x="9" y="9" width="6" height="6" fill="#fff" />`
              : svg`<rect x=${x} y=${y} width="5" height="5" rx="1" fill="#535353" stroke="#c4c4c4" stroke-width="1.400" />`))}
          </svg>
          <label class="c2" for="x">X:</label><input class="field c3" id="x" .value=${"997,4084 p"} />
          <label class="c5" for="w">W:</label><input class="field c6" id="w" .value=${"618,0112 p"} />
          <label class="c2" for="y">Y:</label><input class="field c3" id="y" .value=${"960,6392 p"} />
          <label class="c5" for="h">H:</label><input class="field c6" id="h" .value=${"138,0264 p"} />
          <button class="lock" aria-label="Constrain proportions"><svg width="10" height="20" viewBox="0 0 10 20"><rect x="1.500" y="1" width="7" height="10" rx="3.500" fill="none" stroke="#eee" stroke-width="2" /><rect x="1.500" y="9" width="7" height="10" rx="3.500" fill="none" stroke="#eee" stroke-width="2" /></svg></button>
          <span class="angle"><svg width="18" height="14" viewBox="0 0 18 14"><path d="M13 12H1L11 2M6 7c3 0 4 2 4 5" fill="none" stroke="#c8c8c8" stroke-width="1.500" /><path d="M15.500 4h2v2h-2zM15.500 10h2v2h-2z" /></svg></span>
          <span class="c3">${combo("Rotation", "0°")}</span>
          <span class="flips">
            <button aria-label="Flip horizontally"><svg width="17" height="16" viewBox="0 0 17 16"><path d="M1 2.500l5 5.500-5 5.500z" fill="none" stroke="#c8c8c8" stroke-width="1.300" /><path d="M16.500 1.500v13L10.500 8z" /><path d="M8.300 0v16" stroke="#c8c8c8" stroke-width="1.200" stroke-dasharray="2 1" /></svg></button>
            <button aria-label="Flip vertically"><svg width="14" height="18" viewBox="0 0 14 18"><path d="M1 0h12L7 7z" /><path d="M2.500 16.500h9L7 11.500z" fill="none" stroke="#c8c8c8" stroke-width="1.300" /><path d="M0 9h14" stroke="#c8c8c8" stroke-width="1.200" /></svg></button>
          </span>
        </div>${dots}
      </section>
      <section><h3>Appearance</h3>
        <div class="rows">
          <button class="sw" aria-label="Fill colour"></button><span>Fill</span><span></span>
          <button aria-label="Stroke colour">${noneSwatch(20)}</button><a class="link" href="#stroke">Stroke</a>${combo("Stroke weight", "", { step: true })}
          <span class="sw checks"></span><a class="link" href="#opacity">Opacity</a>${combo("Opacity", "100%", { arrow: chevR })}
        </div>
        <button class="fx">fx.</button>${dots}
      </section>
      <section><h3>Character</h3>
        <div class="char">
          ${choice("Font family", "Aktiv Grotesk", true)}
          ${choice("Font style", "Bold")}
          <svg width="22" height="20" viewBox="0 0 22 20" font-family="Liberation Serif, serif" font-weight="700"><text x="0" y="18" font-size="15">T</text><text x="7" y="18" font-size="23">T</text></svg>
          ${combo("Font size", "81,77 pt", { step: true })}
          <svg class="c4" width="20" height="20" viewBox="0 0 20 20" font-family="Liberation Serif, serif" font-weight="700"><text x="7" y="9" font-size="13">A</text><text x="6" y="19" font-size="15">A</text><path d="M8 10.500h11M8 19.500h11" stroke="#ccc" /><path d="M3 8v12" stroke="#ccc" stroke-width="1.500" /><path d="M3 6l3 4H0zM3 21l3-4H0z" /></svg>
          ${combo("Leading", "(98,12 pt", { step: true })}
          <svg width="20" height="20" viewBox="0 0 20 20"><text x="0" y="13" font-size="14">V</text><text x="10" y="13" font-size="14">A</text><path d="M6 15L12 1" stroke="#ccc" /><path d="M12 17h7" stroke="#ccc" stroke-width="1.500" /><path d="M10 17l4-3v6z" /></svg>
          ${combo("Kerning", "Auto", { step: true })}
          <svg class="c4" width="21" height="20" viewBox="0 0 21 20"><path d="M0 0h21v13H0z" /><text x="1" y="12" font-size="14" fill="#444">VA</text><path d="M2 17h17" stroke="#ccc" stroke-width="1.500" /><path d="M0 17l4-3v6zM21 17l-4-3v6z" /></svg>
          ${combo("Tracking", "0", { step: true })}
        </div>${dots}
      </section>
      <section><h3>Paragraph</h3>
        <div class="ps">${Object.keys(paraIcons).map((n, i) => html`<button class=${i ? "" : "on"} aria-label=${n}>${para(n)}</button>`)}</div>${dots}
      </section>
      <section class="tight"><h3>Bullets And Numbering</h3>
        <div class="lists"><button aria-label="Bullets">${bulletIcon}${chev}</button><button aria-label="Numbering">${numberIcon}${chev}</button></div>
      </section>
      <section><h3>Align</h3>
        <div class="al"><button aria-label="Align to">${artboardIcon}${chev}</button>
          ${Object.entries(alignIcons).map(([n, i]) => html`<button aria-label=${n}><svg width="21" height="21" viewBox="0 0 21 21">${i}</svg></button>`)}</div>${dots}
      </section>
      <section class="last"><h3>Quick Actions</h3>
        <div class="qa"><button>Create Outlines</button><button>Arrange</button></div>
      </section>`;
  }
}

@customElement("app-root")
class AppRoot extends LitElement {
  static styles = css`
    :host { display: grid; grid-template: auto auto 1fr / 78px minmax(0, 1fr) 46px 282px; height: 100vh; overflow: hidden; background: #535353; color: #d4d4d4; font: 11px/16px "Open Sans", "Noto Sans", sans-serif; }
    app-menubar, app-controlbar { grid-column: 1 / 5; }
  `;
  render() {
    return html`<app-menubar></app-menubar><app-controlbar></app-controlbar>
      <app-tools></app-tools><app-document></app-document><app-dock></app-dock><app-properties></app-properties>`;
  }
}
